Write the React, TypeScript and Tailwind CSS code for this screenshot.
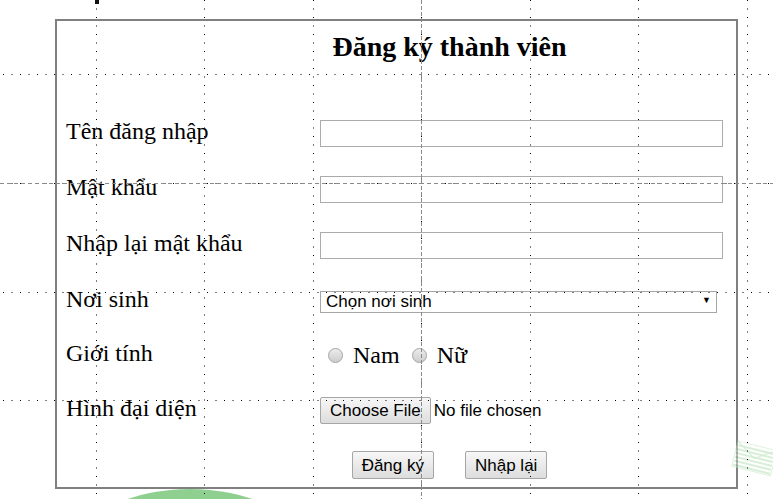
import React from "react";

const serif = "font-['Liberation_Serif','Times_New_Roman',serif]";
const sans = "font-['Liberation_Sans',Arial,sans-serif]";

interface RowProps {
  label: string;
  height: string;
  children: React.ReactNode;
}

function FormRow({ label, height, children }: RowProps) {
  return (
    <div className={`grid grid-cols-[263px_1fr] items-center ${height}`}>
      <div className={`${serif} pl-[9px] text-[24px] leading-[27px] text-black -mt-[3px]`}>
        {label}
      </div>
      <div className="flex items-center">{children}</div>
    </div>
  );
}

function TextBox({ type = "text" }: { type?: string }) {
  return (
    <input
      type={type}
      className="h-[27px] w-[403px] border border-[#ababab] bg-white outline-none"
    />
  );
}

function Radio({ label }: { label: string }) {
  return (
    <label className="flex items-center">
      <span className="h-[15px] w-[15px] rounded-full border border-[#a4a4a4] bg-gradient-to-b from-[#ececec] to-[#cdcdcd]" />
      <span className={`${serif} ml-[10px] text-[24px] leading-[27px] text-black`}>
        {label}
      </span>
    </label>
  );
}

function GrayButton({ children, className = "" }: { children: React.ReactNode; className?: string }) {
  return (
    <button
      type="button"
      className={`${sans} rounded-[2px] border border-[#a6a6a6] bg-gradient-to-b from-[#f7f7f7] to-[#dddddd] text-[17px] leading-[19px] text-black ${className}`}
    >
      {children}
    </button>
  );
}

function Overlay() {
  const vx = [96.5, 204.5, 313.5, 421.5, 530.5, 638.5, 747.5];
  const hy = [74.5, 183.5, 292.5, 400.5];
  return (
    <svg
      className="pointer-events-none absolute left-0 top-0"
      width="773"
      height="499"
      viewBox="0 0 773 499"
    >
      {/* green blob at the bottom */}
      <circle cx="190" cy="690" r="201" fill="#8fcf8f" />
      {/* faded envelope at the right edge */}
      <g transform="translate(738 441) rotate(14)" opacity="0.45">
        <rect x="0" y="0" width="40" height="26" fill="#ffffff" stroke="#b9e2b9" />
        {[3, 7, 11, 15, 19, 23].map((y) => (
          <rect key={y} x="1" y={y} width="38" height="2" fill="#a8dca8" />
        ))}
        <path d="M0 0 L20 13 L40 0" fill="none" stroke="#9fd39f" strokeWidth="1" />
      </g>
      {vx.map((x) => (
        <line key={`v${x}`} x1={x} y1="0" x2={x} y2="499" stroke="#000" strokeDasharray="1 7.5" />
      ))}
      {hy.map((y) => (
        <line key={`h${y}`} x1="3" y1={y} x2="773" y2={y} stroke="#000" strokeDasharray="1 7.5" />
      ))}
      <line x1="421.5" y1="0" x2="421.5" y2="499" stroke="#8a8a8a" strokeDasharray="4 2" />
      <line x1="0" y1="183.5" x2="773" y2="183.5" stroke="#8a8a8a" strokeDasharray="4 3" />
      <rect x="95" y="0" width="4" height="4" fill="#111" />
    </svg>
  );
}

export default function App() {
  return (
    <div className="relative h-[499px] w-[773px] overflow-hidden bg-white">
      <div className="ml-[55px] mt-[19px] flex h-[470px] w-[683px] flex-col border-2 border-[#808080]">
        <div className="flex h-[84px] justify-center pl-[106px] pt-[10px]">
          <h2 className={`${serif} text-[28px] font-bold leading-[32px] text-black`}>
            Đăng ký thành viên
          </h2>
        </div>

        <FormRow label="Tên đăng nhập" height="h-[56px]">
          <TextBox />
        </FormRow>
        <FormRow label="Mật khẩu" height="h-[56px]">
          <TextBox type="password" />
        </FormRow>
        <FormRow label="Nhập lại mật khẩu" height="h-[56px]">
          <TextBox type="password" />
        </FormRow>
        <FormRow label="Nơi sinh" height="h-[56px]">
          <div className="relative">
            <select
              className={`${sans} h-[22px] w-[397px] appearance-none rounded-none border border-[#a6a6a6] bg-white pl-[5px] text-[17px] leading-[19px] text-black outline-none`}
              defaultValue=""
            >
              <option value="">Chọn nơi sinh</option>
            </select>
            <span className="pointer-events-none absolute right-[6px] top-[6px] text-[9px] leading-[10px] text-black">
              ▼
            </span>
          </div>
        </FormRow>
        <FormRow label="Giới tính" height="h-[52px]">
          <div className="flex items-center gap-[12px] pl-[8px]">
            <Radio label="Nam" />
            <Radio label="Nữ" />
          </div>
        </FormRow>
        <FormRow label="Hình đại diện" height="h-[58px]">
          <GrayButton className="h-[27px] px-[9px]">Choose File</GrayButton>
          <span className={`${sans} ml-[3px] text-[17px] leading-[19px] text-black`}>
            No file chosen
          </span>
        </FormRow>

        <div className="mt-[12px] flex justify-center gap-[31px] pl-[106px]">
          <GrayButton className="h-[28px] px-[9px]">Đăng ký</GrayButton>
          <GrayButton className="h-[28px] px-[9px]">Nhập lại</GrayButton>
        </div>
      </div>
      <Overlay />
    </div>
  );
}
